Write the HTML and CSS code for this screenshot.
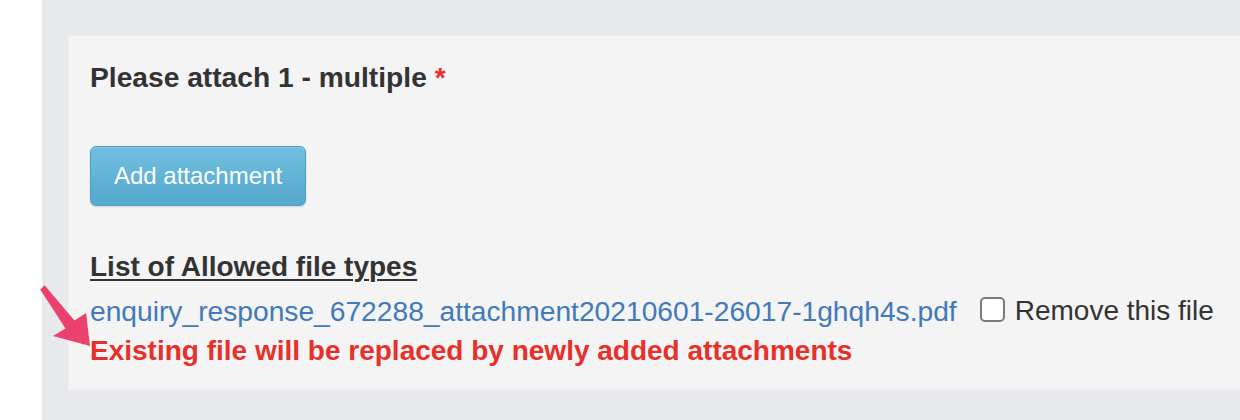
FILE: index.html
```html
<!DOCTYPE html>
<html lang="en">
<head>
<meta charset="utf-8">
<title>Attachment</title>
<link rel="stylesheet" href="styles.css">
</head>
<body>
<div class="page">
  <div class="gutter"></div>
  <main class="main">
    <section class="panel">
      <h2 class="label">Please attach 1 - multiple <span class="req">*</span></h2>
      <button class="btn" type="button">Add attachment</button>
      <div class="allowed">List of Allowed file types</div>
      <div class="file-row">
        <a class="file-link" href="#">enquiry_response_672288_attachment20210601-26017-1ghqh4s.pdf</a>
        <label class="remove"><input type="checkbox" class="chk"><span>Remove this file</span></label>
      </div>
      <div class="warn">Existing file will be replaced by newly added attachments</div>
    </section>
  </main>
</div>
<svg class="arrow" width="100" height="80" viewBox="30 280 100 80" aria-hidden="true">
  <polygon points="40.2,289.4 44.6,285.2 74.5,320.5 86,313 90,346 53,336 65.5,328.5" fill="#ea416e"/>
</svg>
</body>
</html>
```
FILE: styles.css
```css
html, body {
  margin: 0;
  padding: 0;
  background: #ffffff;
  font-family: "Liberation Sans", Arial, Helvetica, sans-serif;
  color: #333333;
}

.page {
  display: flex;
  height: 420px;
  overflow: hidden;
}

.gutter {
  width: 42px;
  flex: 0 0 42px;
  background: #ffffff;
}

.main {
  flex: 1;
  background: #e8e9ed;
  padding: 35px 0 0 26px;
}

.panel {
  background: #f4f4f5;
  border: 1px solid #efeff1;
  border-right: none;
  height: 355px;
  box-sizing: border-box;
  padding: 21px 0 0 21px;
  font-size: 28.2px;
  line-height: 40px;
}

.label {
  margin: 0;
  font-size: 28.2px;
  line-height: 40px;
  font-weight: bold;
  color: #333333;
}

.req {
  color: #e8302a;
}

.btn {
  display: flex;
  align-items: center;
  justify-content: center;
  margin-top: 49px;
  width: 216px;
  height: 60px;
  padding: 0;
  font-family: "Liberation Sans", Arial, sans-serif;
  font-size: 24px;
  color: #ffffff;
  background: linear-gradient(#71bfdf, #55a8cf);
  border: 1px solid #4e9ec8;
  border-radius: 6px;
  box-shadow: 0 1px 2px rgba(0, 0, 0, 0.12), inset 0 1px 0 rgba(255, 255, 255, 0.2);
}

.allowed {
  margin-top: 41px;
  font-size: 28px;
  font-weight: bold;
  text-decoration: underline;
  text-underline-offset: 3px;
  text-decoration-thickness: 2px;
}

.file-row {
  display: flex;
  align-items: center;
  margin-top: 4px;
}

.file-link {
  color: #4279b8;
  text-decoration: none;
}

.remove {
  display: flex;
  align-items: center;
  margin-left: 23px;
  gap: 10px;
}

.remove span {
  font-size: 28px;
}

.chk {
  appearance: none;
  -webkit-appearance: none;
  margin: -4px 0 0 0;
  width: 25px;
  height: 25px;
  border: 2px solid #7a7a7a;
  border-radius: 5px;
  background: #ffffff;
  box-sizing: border-box;
}

.warn {
  margin-top: 0;
  font-size: 28px;
  font-weight: bold;
  color: #e8302a;
}

.arrow {
  position: absolute;
  left: 30px;
  top: 280px;
}
```
